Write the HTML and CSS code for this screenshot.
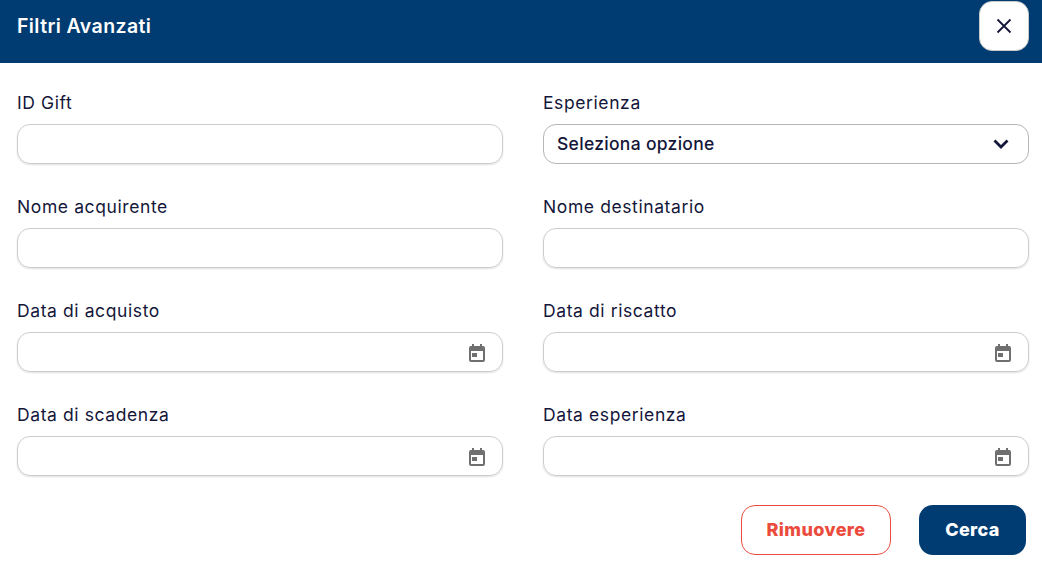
FILE: index.html
```html
<!DOCTYPE html>
<html lang="it">

<head>
  <meta charset="UTF-8" />
  <title>Filtri Avanzati</title>
  <link rel="stylesheet" href="styles.css">
</head>

<body>
  <div class="modal-header">
    <h2>Filtri Avanzati</h2>
    <button class="close-btn" aria-label="Chiudi">
      <svg width="16" height="16" viewBox="0 0 16 16">
        <path d="M1.5 1.5 14.5 14.5M14.5 1.5 1.5 14.5" fill="none" stroke="#14163a" stroke-width="1.8" />
      </svg>
    </button>
  </div>

  <div class="filter-grid">
    <div class="field">
      <label>ID Gift</label>
      <div class="input"></div>
    </div>
    <div class="field">
      <label>Esperienza</label>
      <div class="input select">
        <span>Seleziona opzione</span>
        <svg width="16" height="10" viewBox="0 0 16 10">
          <path d="M1.5 1.5 8 8 14.5 1.5" fill="none" stroke="#14163a" stroke-width="2.8" />
        </svg>
      </div>
    </div>
    <div class="field">
      <label>Nome acquirente</label>
      <div class="input"></div>
    </div>
    <div class="field">
      <label>Nome destinatario</label>
      <div class="input"></div>
    </div>
    <div class="field">
      <label>Data di acquisto</label>
      <div class="input date">
        <svg class="cal" width="16" height="18" viewBox="0 0 16 18"><path d="M3 0h2v2h6V0h2v2h1a2 2 0 0 1 2 2v12a2 2 0 0 1-2 2H2a2 2 0 0 1-2-2V4a2 2 0 0 1 2-2h1zM2 7v9h12V7zm1 2h5v4H3z" fill="#6f6f6f" fill-rule="evenodd" /></svg>
      </div>
    </div>
    <div class="field">
      <label>Data di riscatto</label>
      <div class="input date">
        <svg class="cal" width="16" height="18" viewBox="0 0 16 18"><path d="M3 0h2v2h6V0h2v2h1a2 2 0 0 1 2 2v12a2 2 0 0 1-2 2H2a2 2 0 0 1-2-2V4a2 2 0 0 1 2-2h1zM2 7v9h12V7zm1 2h5v4H3z" fill="#6f6f6f" fill-rule="evenodd" /></svg>
      </div>
    </div>
    <div class="field">
      <label>Data di scadenza</label>
      <div class="input date">
        <svg class="cal" width="16" height="18" viewBox="0 0 16 18"><path d="M3 0h2v2h6V0h2v2h1a2 2 0 0 1 2 2v12a2 2 0 0 1-2 2H2a2 2 0 0 1-2-2V4a2 2 0 0 1 2-2h1zM2 7v9h12V7zm1 2h5v4H3z" fill="#6f6f6f" fill-rule="evenodd" /></svg>
      </div>
    </div>
    <div class="field">
      <label>Data esperienza</label>
      <div class="input date">
        <svg class="cal" width="16" height="18" viewBox="0 0 16 18"><path d="M3 0h2v2h6V0h2v2h1a2 2 0 0 1 2 2v12a2 2 0 0 1-2 2H2a2 2 0 0 1-2-2V4a2 2 0 0 1 2-2h1zM2 7v9h12V7zm1 2h5v4H3z" fill="#6f6f6f" fill-rule="evenodd" /></svg>
      </div>
    </div>
  </div>

  <div class="actions">
    <button class="btn btn-outline">Rimuovere</button>
    <button class="btn btn-primary">Cerca</button>
  </div>
</body>

</html>
```

FILE: styles.css
```css
:root {
  --navy: #003c71;
  --ink: #14163a;
  --red: #eb4b3c;
  --border: #cccccc;
}

body {
  margin: 0;
  background-color: #ffffff;
  color: var(--ink);
  font-family: "Inter", "Open Sans", sans-serif;
  overflow: hidden;
}

.modal-header {
  display: flex;
  justify-content: space-between;
  align-items: flex-start;
  height: 63px;
  box-sizing: border-box;
  padding: 1px 13px 0 17px;
  background-color: var(--navy);
}

.modal-header h2 {
  margin: 12px 0 0;
  color: #ffffff;
  font-size: 19.5px;
  line-height: 26px;
  font-weight: 600;
  letter-spacing: 0.4px;
}

.close-btn {
  display: flex;
  align-items: center;
  justify-content: center;
  width: 50px;
  height: 50px;
  padding: 0;
  border: 1px solid #c9c9c9;
  border-radius: 13px;
  background-color: #ffffff;
}

.filter-grid {
  display: grid;
  grid-template-columns: 486px 486px;
  column-gap: 40px;
  row-gap: 31px;
  padding: 28px 13px 0 17px;
}

.field label {
  display: block;
  height: 24px;
  margin-bottom: 9px;
  font-size: 17.5px;
  line-height: 24px;
  letter-spacing: 0.6px;
}

.input {
  display: flex;
  align-items: center;
  justify-content: flex-end;
  box-sizing: border-box;
  height: 40px;
  padding: 0 17px 0 13px;
  border: 1px solid var(--border);
  border-radius: 13px;
  box-shadow: 0 1px 2px rgba(0, 0, 0, 0.12);
}

.select {
  justify-content: space-between;
  padding-right: 19px;
  border-color: #b5b5b5;
  box-shadow: none;
  font-size: 17.5px;
  font-weight: 500;
  letter-spacing: 0.3px;
}

.select span {
  margin-bottom: 2px;
}

.cal {
  margin-top: 2px;
}

.actions {
  display: flex;
  justify-content: flex-end;
  gap: 28px;
  padding: 29px 16px 0 0;
}

.btn {
  height: 50px;
  padding: 0 0 2px;
  border-radius: 14px;
  font-family: inherit;
  font-size: 18px;
  font-weight: 800;
  letter-spacing: 0.4px;
}

.btn-outline {
  width: 150px;
  border: 1px solid var(--red);
  background-color: #ffffff;
  color: var(--red);
}

.btn-primary {
  width: 107px;
  border: none;
  background-color: var(--navy);
  color: #ffffff;
}
```
